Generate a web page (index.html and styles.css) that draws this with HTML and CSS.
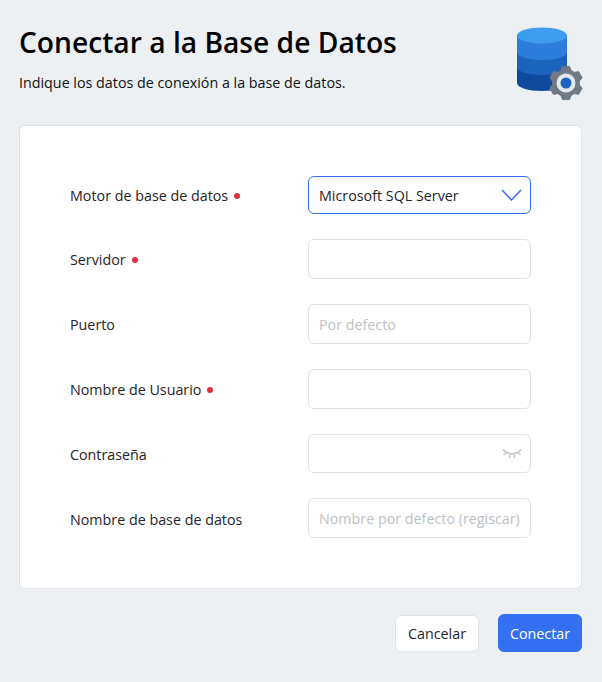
FILE: index.html
```html
<!DOCTYPE html>
<html lang="es">
<head>
    <meta charset="UTF-8">
    <title>Conectar a la Base de Datos</title>
    <link rel="stylesheet" href="styles.css">
</head>
<body>
    <div class="header">
        <div class="header-text">
            <h1>Conectar a la Base de Datos</h1>
            <p>Indique los datos de conexión a la base de datos.</p>
        </div>
        <svg class="db-icon" width="68" height="76" viewBox="0 0 68 76">
            <path d="M1 10v47c0 4.500 11 8 25 8s25-3.500 25-8V10z" fill="#0f4a9e"/>
            <path d="M1 10v31c0 4.500 11 8 25 8s25-3.500 25-8V10z" fill="#1c63bd"/>
            <path d="M1 10v16c0 4.500 11 8 25 8s25-3.500 25-8V10z" fill="#2d7ddc"/>
            <ellipse cx="26" cy="9.500" rx="25" ry="8" fill="#3d9df0"/>
            <polygon transform="translate(50 57)" fill="#6f7a86" stroke="#6f7a86" stroke-linejoin="round" points="-5.060,-12.500 -3.500,-16.600 3.500,-16.600 5.060,-12.500 8.300,-10.630 12.630,-11.330 16.130,-5.270 13.360,-1.870 13.360,1.870 16.130,5.270 12.630,11.330 8.300,10.630 5.060,12.500 3.500,16.600 -3.500,16.600 -5.060,12.500 -8.300,10.630 -12.630,11.330 -16.130,5.270 -13.360,1.870 -13.360,-1.870 -16.130,-5.270 -12.630,-11.330 -8.300,-10.630"/>
            <circle cx="50" cy="57" r="9.500" fill="#e3e6ea"/>
            <circle cx="50" cy="57" r="5.500" fill="#1c63bd"/>
        </svg>
    </div>

    <form class="card">
        <div class="row">
            <label>Motor de base de datos <span class="req"></span></label>
            <div class="field select-field">
                <span>Microsoft SQL Server</span>
                <svg width="21" height="14" viewBox="0 0 21 14"><path d="M1 2l9.500 10L20 2" fill="none" stroke="#3b6ff0" stroke-width="1.500"/></svg>
            </div>
        </div>
        <div class="row">
            <label>Servidor <span class="req"></span></label>
            <div class="field"></div>
        </div>
        <div class="row">
            <label>Puerto</label>
            <div class="field placeholder">Por defecto</div>
        </div>
        <div class="row">
            <label>Nombre de Usuario <span class="req"></span></label>
            <div class="field"></div>
        </div>
        <div class="row">
            <label>Contraseña</label>
            <div class="field eye-field">
                <svg width="20" height="12" viewBox="0 0 20 12"><path d="M1 1.500c4 5.500 14 5.500 18 0M4 4.500L1.500 7M8 6L7.500 10M12 6l.5 4M16 4.500L18.500 7" fill="none" stroke="#c4c8cc" stroke-width="1.500"/></svg>
            </div>
        </div>
        <div class="row">
            <label>Nombre de base de datos</label>
            <div class="field placeholder">Nombre por defecto (regiscar)</div>
        </div>
    </form>

    <div class="actions">
        <button type="button" class="btn">Cancelar</button>
        <button type="button" class="btn btn-primary">Conectar</button>
    </div>
</body>
</html>
```

FILE: styles.css
```css
:root {
    --color-text: #1f2329;
    --color-border: #e0e2e5;
    --color-blue: #356ff2;
}

* {
    box-sizing: border-box;
}

body {
    margin: 0;
    padding: 0 20px 0 19px;
    height: 682px;
    overflow: hidden;
    background-color: #edf0f3;
    font-family: "Open Sans", sans-serif;
    font-size: 14.3px;
    color: var(--color-text);
}

.header {
    display: flex;
    justify-content: space-between;
    height: 125px;
    padding-top: 23px;
}

h1 {
    margin: 0;
    font-size: 28.2px;
    line-height: 38px;
    font-weight: 600;
    color: #000000;
}

.header-text p {
    margin: 12px 0 0;
    line-height: 20px;
    color: #111111;
}

.db-icon {
    margin: 3px -2px 0 0;
}

.card {
    display: flex;
    flex-direction: column;
    gap: 25px;
    height: 464px;
    padding: 50px 50px 0;
    background-color: #ffffff;
    border: 1px solid var(--color-border);
    border-radius: 6px;
}

.row {
    display: flex;
    align-items: center;
    justify-content: space-between;
    height: 40px;
}

.row:first-child {
    height: 38px;
}

.row:nth-child(5) {
    height: 39px;
}

.row:nth-child(n+5) label {
    padding-top: 2px;
}

.row label {
    display: flex;
    align-items: center;
    gap: 6px;
}

.req {
    width: 6px;
    height: 6px;
    margin-top: 2px;
    border-radius: 50%;
    background-color: #e03040;
}

.field {
    display: flex;
    align-items: center;
    justify-content: space-between;
    width: 223px;
    height: 100%;
    padding: 0 10px;
    border: 1px solid var(--color-border);
    border-radius: 6px;
}

.select-field {
    border-color: var(--color-blue);
    padding-right: 8px;
}

.placeholder {
    color: #bdbfc3;
    white-space: nowrap;
}

.eye-field {
    justify-content: flex-end;
    padding-right: 8px;
}

.actions {
    display: flex;
    justify-content: flex-end;
    align-items: flex-end;
    gap: 19px;
    margin-top: 25px;
}

.btn {
    width: 84px;
    height: 37px;
    padding: 0;
    font-family: inherit;
    font-size: 14.3px;
    color: var(--color-text);
    background-color: #ffffff;
    border: 1px solid var(--color-border);
    border-radius: 6px;
}

.btn-primary {
    height: 38px;
    color: #ffffff;
    background-color: var(--color-blue);
    border-color: var(--color-blue);
}
```
